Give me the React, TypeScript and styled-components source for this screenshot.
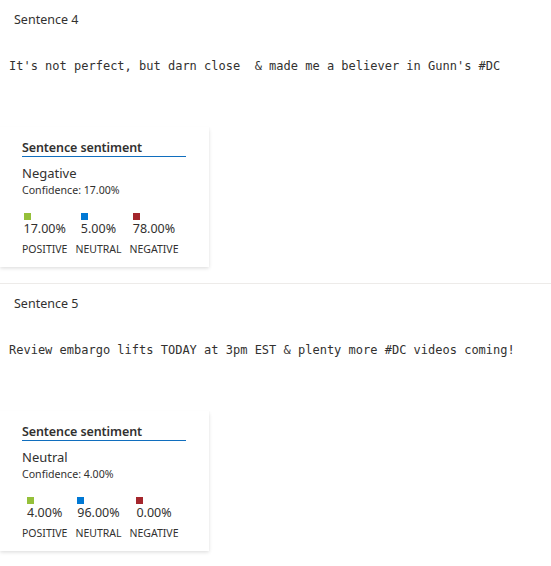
import React from "react";
import styled, { createGlobalStyle } from "styled-components";

const Global = createGlobalStyle`
  html, body { margin: 0; padding: 0; background: #ffffff; }
  body { font-family: "Noto Sans", "Open Sans", sans-serif; color: #323130; }
`;

const Page = styled.div`
  width: 551px;
  display: flex;
  flex-direction: column;
`;

const Section = styled.section`
  height: 283px;
  border-bottom: 1px solid #edebe9;
  display: flex;
  flex-direction: column;
  align-items: flex-start;
`;

const Header = styled.div`
  padding: 10px 14px 0;
  font-size: 12.5px;
  line-height: 20px;
  color: #323130;
`;

const Mono = styled.div`
  margin: 27px 0 0 9px;
  font-family: "DejaVu Sans Mono", "Liberation Mono", monospace;
  font-size: 12px;
  line-height: 18px;
  white-space: pre;
  color: #323130;
`;

const Card = styled.div`
  margin-top: 52px;
  width: 209px;
  height: 140px;
  box-sizing: border-box;
  padding: 12px 0 0 22px;
  background: #fff;
  box-shadow: 0 1.6px 3.6px rgba(0, 0, 0, 0.132), 0 0.3px 0.9px rgba(0, 0, 0, 0.108);
  display: flex;
  flex-direction: column;
  align-items: flex-start;
`;

const Title = styled.div`
  width: 164px;
  font-size: 12.5px;
  font-weight: 600;
  line-height: 17px;
  letter-spacing: -0.1px;
  border-bottom: 1px solid #106ebe;
  color: #323130;
`;

const Label = styled.div`
  margin-top: 7px;
  font-size: 13px;
  line-height: 18px;
`;

const Confidence = styled.div`
  margin-top: 1px;
  font-size: 10.6px;
  line-height: 14px;
`;

const Scores = styled.div`
  margin-top: 16px;
  display: flex;
  gap: 8px;
`;

const Score = styled.div`
  display: flex;
  flex-direction: column;
  align-items: center;
`;

const ValueBlock = styled.div`
  display: flex;
  flex-direction: column;
  align-items: flex-start;
`;

const Swatch = styled.div<{ $color: string }>`
  width: 7px;
  height: 7px;
  background: ${(p) => p.$color};
`;

const Value = styled.div`
  font-size: 12.5px;
  line-height: 18px;
`;

const ScoreName = styled.div`
  margin-top: 4px;
  font-size: 10.5px;
  line-height: 14px;
  text-transform: uppercase;
`;

type Item = {
  n: number;
  text: string;
  label: string;
  conf: string;
  pos: string;
  neu: string;
  neg: string;
};

const items: Item[] = [
  {
    n: 4,
    text: "It's not perfect, but darn close  & made me a believer in Gunn's #DC",
    label: "Negative",
    conf: "17.00%",
    pos: "17.00%",
    neu: "5.00%",
    neg: "78.00%",
  },
  {
    n: 5,
    text: "Review embargo lifts TODAY at 3pm EST & plenty more #DC videos coming!",
    label: "Neutral",
    conf: "4.00%",
    pos: "4.00%",
    neu: "96.00%",
    neg: "0.00%",
  },
];

export default function App() {
  return (
    <>
      <Global />
      <Page>
        {items.map((it) => (
          <Section key={it.n}>
            <Header>Sentence {it.n}</Header>
            <Mono>{it.text}</Mono>
            <Card>
              <Title>Sentence sentiment</Title>
              <Label>{it.label}</Label>
              <Confidence>Confidence: {it.conf}</Confidence>
              <Scores>
                {[
                  { c: "#95c03a", v: it.pos, n: "Positive" },
                  { c: "#0078d4", v: it.neu, n: "Neutral" },
                  { c: "#a4262c", v: it.neg, n: "Negative" },
                ].map((s) => (
                  <Score key={s.n}>
                    <ValueBlock>
                      <Swatch $color={s.c} />
                      <Value>{s.v}</Value>
                    </ValueBlock>
                    <ScoreName>{s.n}</ScoreName>
                  </Score>
                ))}
              </Scores>
            </Card>
          </Section>
        ))}
      </Page>
    </>
  );
}
